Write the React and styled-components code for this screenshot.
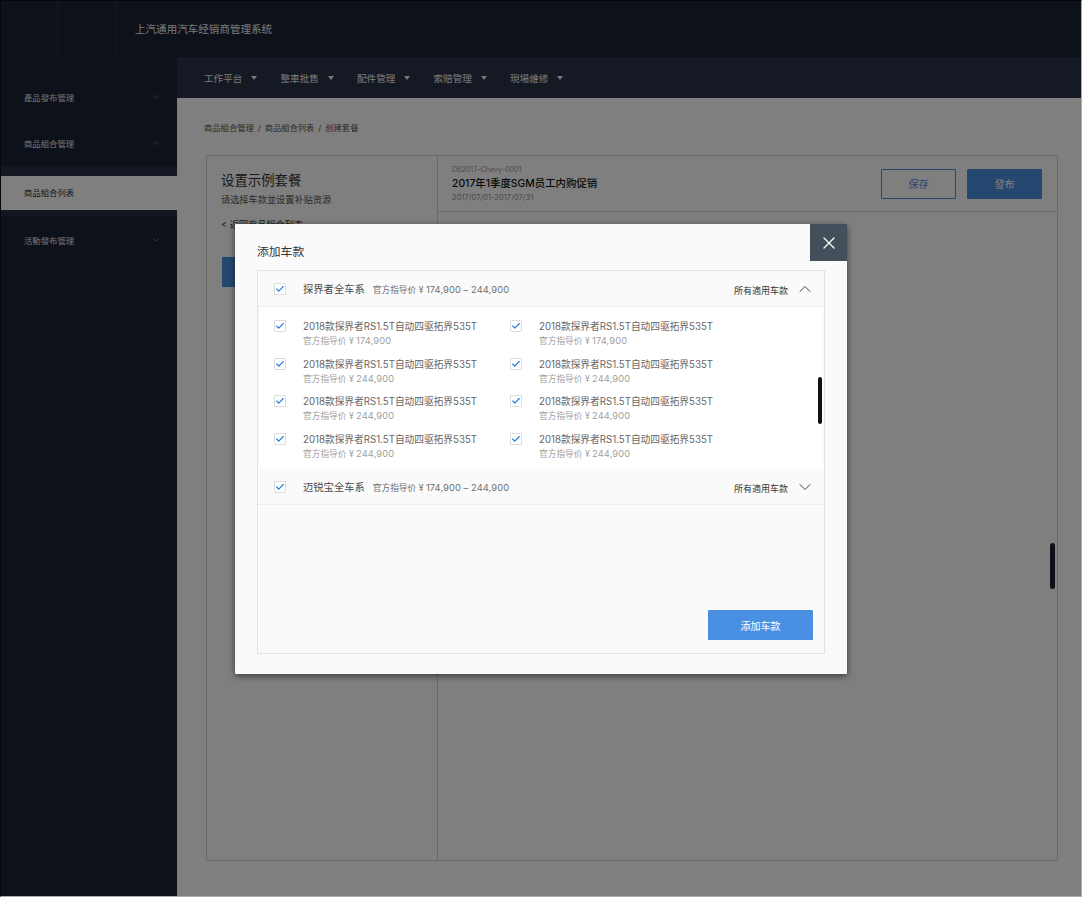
import React from "react";
import styled, { createGlobalStyle } from "styled-components";
import { Check, ChevronDown, ChevronUp, X } from "lucide-react";

const GlobalStyle = createGlobalStyle`
	html, body {
		margin: 0;
		padding: 0;
		background: #fff;
	}
	* {
		box-sizing: border-box;
	}
	body {
		font-family: Inter, "Noto Sans CJK SC", sans-serif;
	}
`

const Page = styled.div`
	position: relative;
	width: 1082px;
	height: 897px;
	overflow: hidden;
	background: #fefefe;
	display: flex;
	flex-direction: column;
`

const TopBar = styled.header`
	height: 57px;
	background: #1b2233;
	display: flex;
	flex-shrink: 0;
`

const LogoCell = styled.div`
	width: 58px;
	border-right: 1px solid #2a3244;
`

const SystemName = styled.div`
	padding-left: 19px;
	line-height: 60px;
	font-size: 10.55px;
	color: #f2f2f2;
`

const Body = styled.div`
	flex: 1;
	display: flex;
	min-height: 0;
`

const Sidebar = styled.aside`
	width: 177px;
	flex-shrink: 0;
	background: #1b2233;
	padding-top: 17px;
`

const MenuGroup = styled.div`
	height: 46px;
	padding: 0 16px 0 24px;
	display: flex;
	align-items: center;
	justify-content: space-between;
	font-size: 8.4px;
	color: #e4e4e4;
	svg {
		color: #7b8088;
	}
`

const SubMenu = styled.div`
	height: 50px;
	padding-top: 10px;
	margin-bottom: 1px;
	background: #272f43;
`

const SubItem = styled.div`
	height: 34px;
	padding-left: 24px;
	line-height: 35px;
	font-size: 8.4px;
	color: #2a2f3a;
	background: #fff;
`

const Main = styled.main`
	flex: 1;
	min-width: 0;
	display: flex;
	flex-direction: column;
`

const NavBar = styled.nav`
	height: 41px;
	background: #2a3347;
	display: flex;
	padding-left: 27px;
	flex-shrink: 0;
`

const NavItem = styled.div`
	width: 76.5px;
	display: flex;
	align-items: center;
	gap: 9px;
	font-size: 9.6px;
	color: #f0f0f0;
	&::after {
		content: "";
		border-left: 3.5px solid transparent;
		border-right: 3.5px solid transparent;
		border-top: 4.5px solid #f0f0f0;
	}
`

const Content = styled.div`
	flex: 1;
	padding: 0 24px 36px 29px;
	display: flex;
	flex-direction: column;
	min-height: 0;
`

const Crumbs = styled.div`
	height: 57px;
	margin-left: -2px;
	padding-top: 23px;
	line-height: 14px;
	font-size: 8.3px;
	word-spacing: 1.6px;
	color: #555;
`

const Panel = styled.section`
	flex: 1;
	display: flex;
	border: 1px solid #d4d4d4;
	min-height: 0;
`

const SetupColumn = styled.div`
	width: 231px;
	flex-shrink: 0;
	border-right: 1px solid #d4d4d4;
	padding: 14px 14px;
`

const SetupTitle = styled.div`
	font-size: 13.4px;
	line-height: 20px;
	color: #333;
`

const SetupHint = styled.div`
	margin-top: 2px;
	font-size: 9.2px;
	line-height: 16px;
	color: #555;
`

const BackLink = styled.div`
	margin-top: 9px;
	font-size: 9.2px;
	line-height: 16px;
	color: #333;
`

const SetupButton = styled.div`
	margin: 24px 0 0 1px;
	width: 190px;
	height: 30px;
	background: #4a90e2;
	border-radius: 1px;
`

const DetailColumn = styled.div`
	flex: 1;
	min-width: 0;
`

const DetailHeader = styled.div`
	height: 56px;
	padding: 0 15px 0 14px;
	border-bottom: 1px solid #d4d4d4;
	display: flex;
	align-items: center;
	justify-content: space-between;
`

const Code = styled.div`
	font-size: 7px;
	line-height: 10px;
	color: #999;
`

const PromoName = styled.div`
	font-size: 10.4px;
	line-height: 18px;
	color: #111;
	font-weight: 500;
`

const DateRange = styled.div`
	font-size: 7.6px;
	line-height: 10px;
	color: #999;
`

const Actions = styled.div`
	display: flex;
	gap: 11px;
`

const ActionButton = styled.div`
	width: 75px;
	height: 30px;
	border: 1px solid #4a90e2;
	border-radius: 1px;
	display: flex;
	align-items: center;
	justify-content: center;
	font-size: 10px;
	color: ${p => (p.$solid ? "#fff" : "#4a90e2")};
	background: ${p => (p.$solid ? "#4a90e2" : "transparent")};
`

const Overlay = styled.div`
	position: absolute;
	inset: 0;
	background: rgba(0, 0, 0, 0.5);
	border-style: solid;
	border-width: 1px;
	border-color: #05070b #b0aab0 #b0aab0 #05070b;
`

const PageScroll = styled.div`
	position: absolute;
	left: 1049px;
	top: 542px;
	width: 5px;
	height: 46px;
	border-radius: 3px;
	background: #0e1116;
`

const Modal = styled.div`
	position: absolute;
	left: 234px;
	top: 223px;
	width: 612px;
	height: 450px;
	background: #fafafa;
	border-radius: 1px;
	box-shadow: 0 2px 7px rgba(0, 0, 0, 0.55);
	padding: 0 22px 20px;
	display: flex;
	flex-direction: column;
`

const CloseButton = styled.div`
	position: absolute;
	top: 0;
	right: 0;
	width: 37px;
	height: 37px;
	background: #43505c;
	color: #fff;
	display: flex;
	align-items: center;
	justify-content: center;
`

const ModalTitle = styled.div`
	height: 46px;
	padding-top: 18px;
	line-height: 20px;
	font-size: 11.8px;
	color: #333;
	flex-shrink: 0;
`

const ListBox = styled.div`
	position: relative;
	flex: 1;
	border: 1px solid #e4e4e4;
	min-height: 0;
`

const SeriesRow = styled.div`
	height: 36px;
	padding: 0 8px 0 16px;
	margin-right: 1px;
	border-bottom: 1px solid #ebeded;
	display: flex;
	align-items: center;
`

const SeriesName = styled.span`
	margin-left: 17px;
	font-size: 10.3px;
	color: #4a4a4a;
`

const SeriesPrice = styled.span`
	margin-left: 8px;
	font-size: 8.7px;
	color: #707070;
	padding-top: 1px;
`

const Amount = styled.span`
	font-size: 9.3px;
	letter-spacing: 0.1px;
`

const AllModels = styled.div`
	margin-left: auto;
	display: flex;
	align-items: center;
	gap: 7px;
	font-size: 9px;
	color: #333;
	svg {
		color: #444;
	}
`

const AllModelsLabel = styled.span`
	padding-top: 3px;
`

const ModelGrid = styled.div`
	margin: 0 1px 0 1px;
	height: 162px;
	background: #fff;
	padding: 13px 0 0 15px;
	display: grid;
	grid-template-columns: 236px 236px;
	grid-auto-rows: 37.5px;
`

const Model = styled.div`
	display: flex;
	align-items: flex-start;
`

const ModelText = styled.div`
	margin-left: 17px;
`

const ModelName = styled.div`
	font-size: 9.7px;
	line-height: 14px;
	color: #666;
`

const ModelPrice = styled.div`
	font-size: 8.7px;
	line-height: 14px;
	color: #a0a0a0;
`

const Box = styled.span`
	width: 12px;
	height: 12px;
	flex-shrink: 0;
	background: #fff;
	border: 1px solid #dcdcdc;
	border-radius: 1px;
	display: flex;
	align-items: center;
	justify-content: center;
	color: #1a78e0;
`

const ListScroll = styled.div`
	position: absolute;
	left: 560px;
	top: 106px;
	width: 4px;
	height: 47px;
	border-radius: 2px;
	background: #0e1116;
`

const AddButton = styled.div`
	position: absolute;
	right: 11px;
	bottom: 13px;
	width: 105px;
	height: 30px;
	background: #4a90e2;
	border-radius: 1px;
	color: #fff;
	font-size: 10px;
	display: flex;
	align-items: center;
	justify-content: center;
`

const navItems = ["工作平台", "整車批售", "配件管理", "索賠管理", "現場維修"];
const prices = ["174,900", "174,900", "244,900", "244,900", "244,900", "244,900", "244,900", "244,900"];

const Tick = () => (
	<Box>
		<Check size={10} strokeWidth={2.6} />
	</Box>
);

const App = () => {
	return <Page>
		<GlobalStyle />
		<TopBar>
			<LogoCell />
			<LogoCell />
			<SystemName>上汽通用汽车经销商管理系统</SystemName>
		</TopBar>
		<Body>
			<Sidebar>
				<MenuGroup>產品發布管理<ChevronDown size={10} /></MenuGroup>
				<MenuGroup>商品組合管理<ChevronUp size={10} /></MenuGroup>
				<SubMenu>
					<SubItem>商品組合列表</SubItem>
				</SubMenu>
				<MenuGroup>活動發布管理<ChevronDown size={10} /></MenuGroup>
			</Sidebar>
			<Main>
				<NavBar>
					{navItems.map(item => <NavItem key={item}>{item}</NavItem>)}
				</NavBar>
				<Content>
					<Crumbs>商品組合管理 / 商品組合列表 / 创建套餐</Crumbs>
					<Panel>
						<SetupColumn>
							<SetupTitle>设置示例套餐</SetupTitle>
							<SetupHint>请选择车款並设置补贴资源</SetupHint>
							<BackLink>&lt; 返回商品組合列表</BackLink>
							<SetupButton />
						</SetupColumn>
						<DetailColumn>
							<DetailHeader>
								<div>
									<Code>DB2017–Chevy–0001</Code>
									<PromoName>2017年1季度SGM员工内购促销</PromoName>
									<DateRange>2017/07/01-2017/07/31</DateRange>
								</div>
								<Actions>
									<ActionButton>保存</ActionButton>
									<ActionButton $solid>發布</ActionButton>
								</Actions>
							</DetailHeader>
						</DetailColumn>
					</Panel>
				</Content>
			</Main>
		</Body>
		<Overlay>
			<PageScroll />
			<Modal>
				<CloseButton><X size={20} strokeWidth={1.5} /></CloseButton>
				<ModalTitle>添加车款</ModalTitle>
				<ListBox>
					<SeriesRow>
						<Tick />
						<SeriesName>探界者全车系</SeriesName>
						<SeriesPrice>官方指导价 ¥ <Amount>174,900 – 244,900</Amount></SeriesPrice>
						<AllModels>
							<AllModelsLabel>所有適用车款</AllModelsLabel>
							<ChevronUp size={20} strokeWidth={1.2} />
						</AllModels>
					</SeriesRow>
					<ModelGrid>
						{prices.map((price, i) => (
							<Model key={i}>
								<Tick />
								<ModelText>
									<ModelName>2018款探界者RS1.5T自动四驱拓界535T</ModelName>
									<ModelPrice>官方指导价 ¥ <Amount>{price}</Amount></ModelPrice>
								</ModelText>
							</Model>
						))}
					</ModelGrid>
					<SeriesRow>
						<Tick />
						<SeriesName>迈锐宝全车系</SeriesName>
						<SeriesPrice>官方指导价 ¥ <Amount>174,900 – 244,900</Amount></SeriesPrice>
						<AllModels>
							<AllModelsLabel>所有適用车款</AllModelsLabel>
							<ChevronDown size={20} strokeWidth={1.2} />
						</AllModels>
					</SeriesRow>
					<ListScroll />
					<AddButton>添加车款</AddButton>
				</ListBox>
			</Modal>
		</Overlay>
	</Page>
}

export default App;
